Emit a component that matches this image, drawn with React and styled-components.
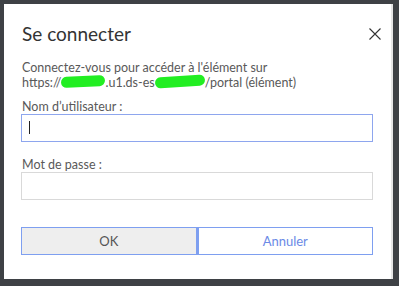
import React from 'react'
import styled, { createGlobalStyle } from 'styled-components'

const Global = createGlobalStyle`
  html, body {
    margin: 0;
    padding: 0;
    background: #3e4145;
  }
  body {
    font-family: Lato, "Noto Sans", sans-serif;
  }
`

const Backdrop = styled.div`
  width: 399px;
  height: 286px;
  box-sizing: border-box;
  padding: 4px 0 0 4px;
  background: #3e4145;
`

const Panel = styled.div`
  width: 389px;
  height: 275px;
  box-sizing: border-box;
  background: #fff;
  border-right: 2px solid #e6e6e6;
  padding: 18px 18px 0 17px;
  display: flex;
  flex-direction: column;
`

const Header = styled.div`
  display: flex;
  justify-content: space-between;
  align-items: center;
  height: 24px;
  padding-left: 1px;
`

const Title = styled.h2`
  margin: 0;
  font-size: 19px;
  font-weight: 400;
  color: #333;
  line-height: 24px;
`

const Close = styled.button`
  border: none;
  background: none;
  padding: 0;
  width: 12px;
  height: 12px;
  margin-right: -8px;
  display: flex;
  cursor: pointer;
`

const Info = styled.p`
  margin: 14px 0 0 1px;
  font-size: 12.5px;
  line-height: 15px;
  color: #595959;
`

const Redact = styled.span`
  display: inline-block;
  background: #22ee22;
  color: transparent;
  border-radius: 6px;
  height: 11px;
  vertical-align: -1px;
  width: ${p => p.$w}px;
  transform: rotate(${p => p.$r || 0}deg);
`

const Field = styled.div`
  display: flex;
  flex-direction: column;
  margin-top: ${p => p.$top}px;
`

const Label = styled.label`
  font-size: 12.5px;
  line-height: 14px;
  color: #595959;
  padding-left: 1px;
`

const Input = styled.input`
  height: 28px;
  box-sizing: border-box;
  border: 1px solid ${p => (p.$focus ? '#8ea6ee' : '#d9d9d9')};
  outline: none;
  padding: 0 7px;
  font-size: 14px;
  font-family: inherit;
  background: #fff;
  caret-color: #222;
`

const Caret = styled.span`
  position: absolute;
  left: 8px;
  top: 7px;
  width: 1px;
  height: 13px;
  background: #222;
`

const InputWrap = styled.div`
  position: relative;
  display: flex;
  flex-direction: column;
`

const Actions = styled.div`
  display: flex;
  margin-top: 27px;
`

const Button = styled.button`
  flex: 1;
  height: 28px;
  box-sizing: border-box;
  font-family: inherit;
  font-size: 13px;
  border: 1px solid #7e9ff0;
  border-width: ${p => (p.$primary ? '1px 2px 1px 1px' : '1px')};
  background: ${p => (p.$primary ? '#eeeeee' : '#fff')};
  color: ${p => (p.$primary ? '#555' : '#6b8ae6')};
  cursor: pointer;
`

export default function App() {
  return (
    <>
      <Global />
      <Backdrop>
        <Panel>
          <Header>
            <Title>Se connecter</Title>
            <Close aria-label="Fermer">
              <svg width="12" height="12" viewBox="0 0 12 12">
                <path d="M0.5 0.5 L11.5 11.5 M11.5 0.5 L0.5 11.5" stroke="#333" strokeWidth="1.1" fill="none" />
              </svg>
            </Close>
          </Header>
          <Info>
            Connectez-vous pour accéder à l'élément sur
            <br />
            https://<Redact $w={44} $r={-3}>xxxxx</Redact>.u1.ds-es<Redact $w={50} $r={-4}>xxxxxx</Redact>/portal (élément)
          </Info>
          <Field $top={10}>
            <Label>Nom d’utilisateur :</Label>
            <InputWrap>
              <Input $focus />
              <Caret />
            </InputWrap>
          </Field>
          <Field $top={16}>
            <Label>Mot de passe :</Label>
            <Input type="password" />
          </Field>
          <Actions>
            <Button $primary>OK</Button>
            <Button>Annuler</Button>
          </Actions>
        </Panel>
      </Backdrop>
    </>
  )
}
